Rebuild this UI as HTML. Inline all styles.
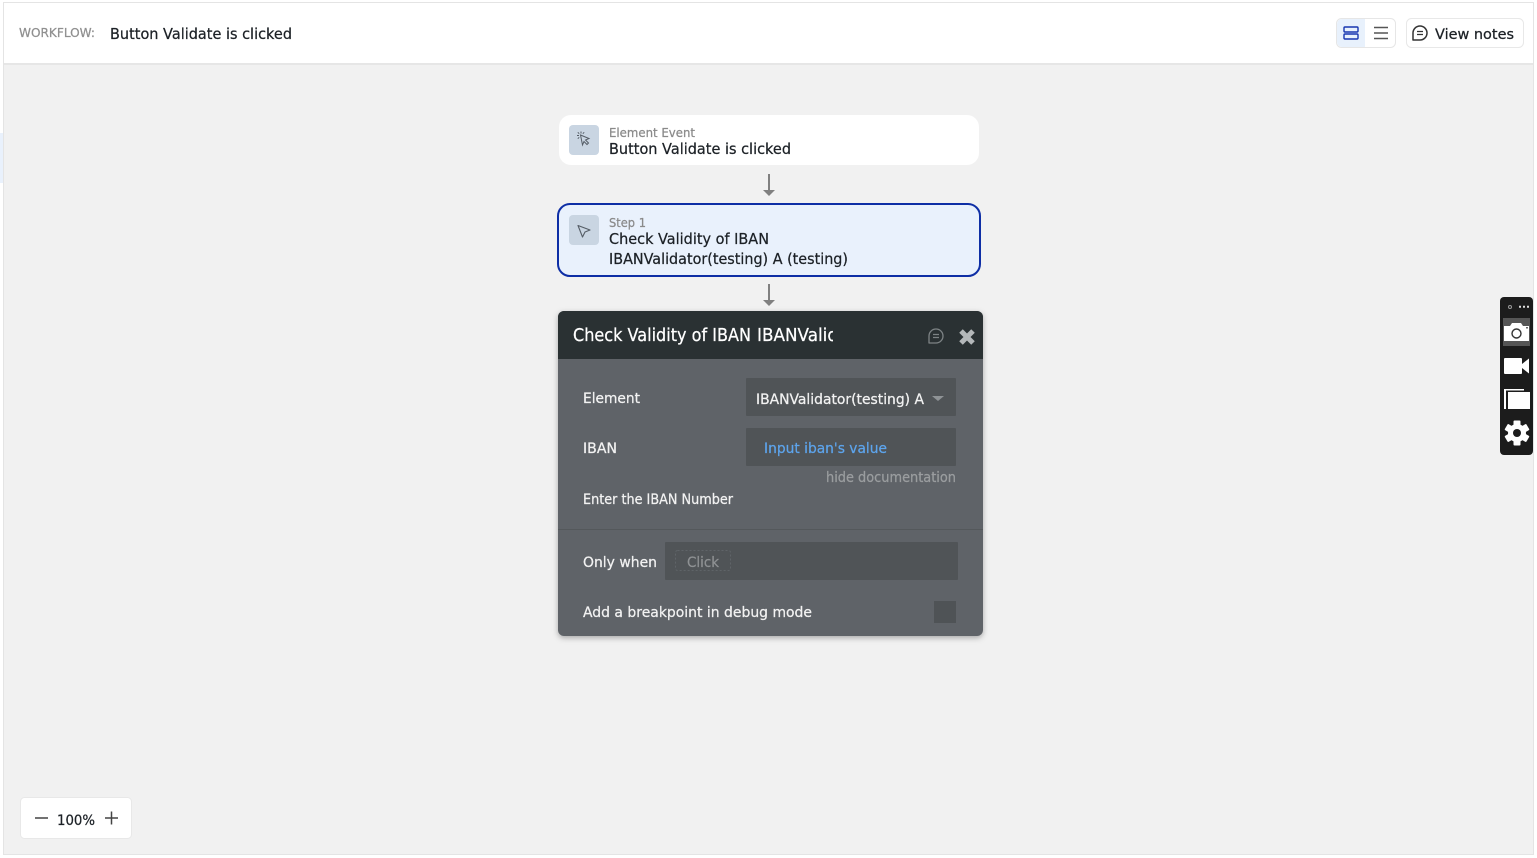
<!DOCTYPE html>
<html><head><meta charset="utf-8"><style>
html,body{margin:0;padding:0;width:1537px;height:858px;overflow:hidden;background:#fff}
svg{display:block;position:absolute;left:0;top:0}
text{font-family:"DejaVu Sans","Liberation Sans",sans-serif;white-space:pre;stroke-width:.25}
</style></head><body>
<svg width="1537" height="858" viewBox="0 0 1537 858" xmlns="http://www.w3.org/2000/svg">
<defs>
<filter id="sh" x="-10%" y="-10%" width="120%" height="120%"><feDropShadow dx="0" dy="2" stdDeviation="3" flood-color="#000" flood-opacity=".3"/></filter>
<clipPath id="tc"><rect x="570" y="320" width="263" height="32"/></clipPath>
</defs>
<rect width="1537" height="858" fill="#fff"/>
<rect x="0" y="133" width="3" height="50" fill="#e9f1fc"/>
<rect x="3.5" y="2.5" width="1530" height="852" fill="#f1f1f1" stroke="#e4e4e4"/>
<rect x="4" y="3" width="1529" height="60" fill="#fff"/>
<rect x="4" y="63" width="1529" height="2" fill="#e6e6e6"/>

<text x="19" y="37" font-size="12.5" fill="#8f8f8f" stroke="#8f8f8f" textLength="76" lengthAdjust="spacingAndGlyphs">WORKFLOW:</text>
<text x="110" y="39" font-size="15.5" fill="#1c2126" stroke="#1c2126" textLength="182" lengthAdjust="spacingAndGlyphs">Button Validate is clicked</text>

<rect x="1336.5" y="18.5" width="59" height="29" rx="5" fill="#fff" stroke="#e6e6e6"/>
<path d="M1342 19h23v28h-23a5 5 0 0 1-5-5V24a5 5 0 0 1 5-5z" fill="#e8f1fc"/>
<rect x="1344" y="27" width="14" height="5" rx="1" fill="none" stroke="#1736b0" stroke-width="1.4"/>
<rect x="1344" y="34" width="14" height="5" rx="1" fill="none" stroke="#1736b0" stroke-width="1.4"/>
<path d="M1374 27.500h14M1374 33h14M1374 38.500h14" stroke="#555" stroke-width="1.600" fill="none"/>
<rect x="1406.500" y="18.500" width="117" height="29" rx="5" fill="#fff" stroke="#e8e8e8"/>
<path d="M1413 40v-7a7 7 0 1 1 7 7z" fill="none" stroke="#333" stroke-width="1.500" stroke-linejoin="round"/>
<path d="M1417 31.500h6M1417 34.500h6" stroke="#333" stroke-width="1.300"/>
<text x="1435" y="39" font-size="14.500" fill="#1c2126" stroke="#1c2126" textLength="79" lengthAdjust="spacingAndGlyphs">View notes</text>

<rect x="559" y="115" width="420" height="50" rx="12" fill="#fff"/>
<rect x="569" y="125" width="30" height="30" rx="4" fill="#c9d5e2"/>
<path d="M580.500 135l8.500 3.500-3.500 1.500 3 3-1.500 1.500-3-3-1.500 3.500z" fill="none" stroke="#555d66" stroke-width="1"/>
<path d="M581 131.500v2M577 135.500h2M577.800 132.300l1.400 1.400M584.200 132.300l-1.400 1.400M577.800 138.700l1.400-1.400" stroke="#555d66" stroke-width="1"/>
<text x="609" y="137" font-size="12.500" fill="#8a8a8a" stroke="#8a8a8a" textLength="86" lengthAdjust="spacingAndGlyphs">Element Event</text>
<text x="609" y="154" font-size="15.500" fill="#1c2126" stroke="#1c2126" textLength="182" lengthAdjust="spacingAndGlyphs">Button Validate is clicked</text>

<path d="M769 174v16" stroke="#808080" stroke-width="2"/>
<path d="M763 190h12l-6 6z" fill="#808080"/>

<rect x="558" y="204" width="422" height="72" rx="12" fill="#e9f1fc" stroke="#0e2ea5" stroke-width="2"/>
<rect x="569" y="215" width="30" height="30" rx="4" fill="#c9d5e2"/>
<path d="M578 225.500l12 4.500-5 2-2.500 5z" fill="none" stroke="#555d66" stroke-width="1.100" stroke-linejoin="round"/>
<text x="609" y="227" font-size="12.500" fill="#8a8a8a" stroke="#8a8a8a" textLength="37" lengthAdjust="spacingAndGlyphs">Step 1</text>
<text x="609" y="244" font-size="15.500" fill="#1c2126" stroke="#1c2126" textLength="160" lengthAdjust="spacingAndGlyphs">Check Validity of IBAN</text>
<text x="609" y="264" font-size="15.500" fill="#1c2126" stroke="#1c2126" textLength="239" lengthAdjust="spacingAndGlyphs">IBANValidator(testing) A (testing)</text>

<path d="M769 284v16" stroke="#808080" stroke-width="2"/>
<path d="M763 300h12l-6 6z" fill="#808080"/>

<rect x="558" y="311" width="425" height="325" rx="6" fill="#5f6468" filter="url(#sh)"/>
<path d="M558 359v-42a6 6 0 0 1 6-6h413a6 6 0 0 1 6 6v42z" fill="#2a3133"/>
<text x="573" y="341" font-size="17.500" fill="#fff" stroke="#fff" textLength="178" lengthAdjust="spacingAndGlyphs">Check Validity of IBAN</text>
<g clip-path="url(#tc)"><text x="757" y="341" font-size="17.500" fill="#fff" stroke="#fff" textLength="81" lengthAdjust="spacingAndGlyphs">IBANValid</text></g>
<path d="M929 343v-7a7 7 0 1 1 7 7z" fill="none" stroke="#7d8385" stroke-width="1.300" stroke-linejoin="round"/>
<path d="M933 334.500h6M933 337.500h6" stroke="#7d8385" stroke-width="1.200"/>
<path d="M961 331l12 12M973 331l-12 12" stroke="#b4b8ba" stroke-width="5"/>

<text x="583" y="403" font-size="14.500" fill="#f2f2f2" stroke="#f2f2f2" textLength="57" lengthAdjust="spacingAndGlyphs">Element</text>
<rect x="746" y="378" width="210" height="38" rx="1" fill="#505457"/>
<text x="756" y="404" font-size="14.500" fill="#f2f2f2" stroke="#f2f2f2" textLength="168" lengthAdjust="spacingAndGlyphs">IBANValidator(testing) A</text>
<path d="M932 396h12l-6 5z" fill="#8f9396"/>

<text x="583" y="453" font-size="14.500" fill="#f2f2f2" stroke="#f2f2f2" textLength="34" lengthAdjust="spacingAndGlyphs">IBAN</text>
<rect x="746" y="428" width="210" height="38" rx="1" fill="#505457"/>
<text x="764" y="453" font-size="14.500" fill="#5da4ec" stroke="#5da4ec" textLength="123" lengthAdjust="spacingAndGlyphs">Input iban's value</text>
<text x="826" y="482" font-size="14" fill="#9a9d9f" stroke="#9a9d9f" textLength="130" lengthAdjust="spacingAndGlyphs">hide documentation</text>
<text x="583" y="504" font-size="14" fill="#f2f2f2" stroke="#f2f2f2" textLength="150" lengthAdjust="spacingAndGlyphs">Enter the IBAN Number</text>
<rect x="558" y="529" width="425" height="1" fill="#54585b"/>

<text x="583" y="567" font-size="14.500" fill="#f2f2f2" stroke="#f2f2f2" textLength="74" lengthAdjust="spacingAndGlyphs">Only when</text>
<rect x="665" y="542" width="293" height="38" rx="1" fill="#505457"/>
<rect x="675.500" y="550.500" width="55" height="20" rx="2" fill="none" stroke="#5f6468" stroke-dasharray="2 2"/>
<text x="687" y="567" font-size="14.500" fill="#8e9193" stroke="#8e9193" textLength="32" lengthAdjust="spacingAndGlyphs">Click</text>

<text x="583" y="617" font-size="14.500" fill="#f2f2f2" stroke="#f2f2f2" textLength="229" lengthAdjust="spacingAndGlyphs">Add a breakpoint in debug mode</text>
<rect x="934" y="601" width="22" height="22" fill="#4f5356"/>

<rect x="20.500" y="797.500" width="111" height="41" rx="4" fill="#fff" stroke="#e8e8e8"/>
<path d="M35 818h13M105 818h13M111.500 811.500v13" stroke="#444" stroke-width="1.500"/>
<text x="57" y="825" font-size="14.500" fill="#1c2126" stroke="#1c2126" textLength="38" lengthAdjust="spacingAndGlyphs">100%</text>

<rect x="1500" y="297" width="33" height="158" rx="4" fill="#1c1c1c"/>
<circle cx="1510" cy="307" r="1.500" fill="none" stroke="#999" stroke-width="1"/>
<path d="M1519 305.800h2v2h-2zM1523 305.800h2v2h-2zM1527 305.800h2v2h-2z" fill="#ddd"/>
<rect x="1503" y="318" width="27" height="28" fill="#555"/>
<path d="M1504 326h6l2-3h9l2 3h6v15h-25z" fill="#fff"/>
<circle cx="1516.500" cy="333.500" r="4.500" fill="#fff" stroke="#333" stroke-width="1.400"/>
<rect x="1526" y="327" width="2" height="1.500" fill="#666"/>
<rect x="1504" y="358" width="18" height="16" rx="1" fill="#fff"/>
<path d="M1522 364l7-5.500v15l-7-5.500z" fill="#fff"/>
<path d="M1504 389h20v1.500h-18v18.500h-2z" fill="#fff"/>
<rect x="1508" y="392" width="22" height="17" fill="#fff"/>
<g transform="translate(1517 433)">
<g fill="#fff"><circle r="9"/>
<rect x="-3.500" y="-12.500" width="7" height="25" rx="1"/>
<rect x="-3.500" y="-12.500" width="7" height="25" rx="1" transform="rotate(60)"/>
<rect x="-3.500" y="-12.500" width="7" height="25" rx="1" transform="rotate(120)"/></g>
<circle r="4" fill="#1c1c1c"/>
</g>
</svg>
</body></html>
